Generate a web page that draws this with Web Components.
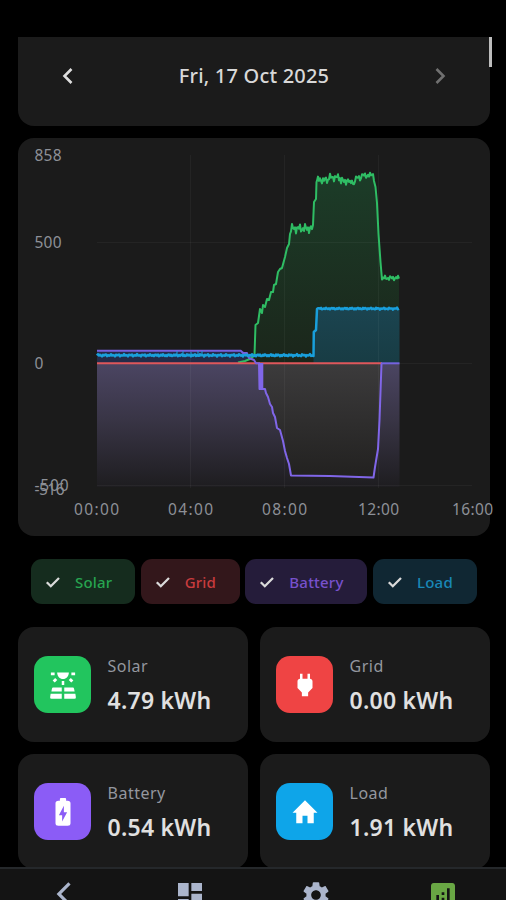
<!DOCTYPE html>
<html lang="en">
<head>
<meta charset="UTF-8">
<meta name="viewport" content="width=device-width, initial-scale=1.0">
<title>Energy History</title>
<style>
    html, body { margin: 0; height: 100%; background: #000; overflow: hidden; }
    body { font-family: "Noto Sans", "Open Sans", sans-serif; color: #dedede; }
</style>
</head>
<body>
<energy-app>
    <date-bar slot="content">Fri, 17 Oct 2025</date-bar>
    <power-chart slot="content"></power-chart>
    <chip-row slot="content">
        <series-chip series="solar" style="width:104px">Solar</series-chip>
        <series-chip series="grid" style="width:99px">Grid</series-chip>
        <series-chip series="battery" style="width:122px">Battery</series-chip>
        <series-chip series="load" style="width:104px">Load</series-chip>
    </chip-row>
    <stat-grid slot="content">
        <stat-card series="solar"><span slot="label">Solar</span>4.79 kWh</stat-card>
        <stat-card series="grid"><span slot="label">Grid</span>0.00 kWh</stat-card>
        <stat-card series="battery"><span slot="label">Battery</span>0.54 kWh</stat-card>
        <stat-card series="load"><span slot="label">Load</span>1.91 kWh</stat-card>
    </stat-grid>
    <nav-bar slot="nav"></nav-bar>
</energy-app>

<script>
const seriesData = {
    solar: {
        color: '#22c55e', chipText: '#27a450', chipBg: '#152c1e',
        icon: `<path d="M7.300 2h9.400c-.2 3.300-2 5.200-4.700 5.200S7.500 5.300 7.300 2z"/>
            <path d="M2.300 2h3v2.200h-3zM18.700 2h3v2.200h-3zM11 8.700h2v3.300h-2zM5.700 6.300l1.700 1.700-2 2-1.700-1.700zM18.300 6.300l2 2-1.700 1.700-2-2z"/>
            <path d="M4 14h7v3.200H2.700l.5-2.400q.2-.8.800-.8zM13 14h7q.6 0 .8.8l.5 2.400H13zM2.100 19H11v4H2.900Q1.500 23 1.700 21.800zM13 19h8.900l.4 2.800q.2 1.200-1.200 1.200H13z"/>`
    },
    grid: {
        color: '#ef4444', chipText: '#c93c3e', chipBg: '#33171b',
        icon: '<path d="M16.010 7L16 3h-2v4h-4V3H8v4h-.010C7 6.990 6 7.990 6 8.990v5.490L9.500 18v3h5v-3l3.500-3.510v-5.500c0-1-1-2-1.990-1.990z"/>'
    },
    battery: {
        color: '#8b5cf6', chipText: '#7751cc', chipBg: '#251c3a',
        icon: '<path fill-rule="evenodd" d="M15.700 3H14.500V1.500Q14.500.7 13.700.7h-3.400q-.8 0-.8.8V3H8.300Q6 3 6 5v16q0 2 2.300 2h7.400Q18 23 18 21V5q0-2-2.300-2zM11.300 19.500v-5H8.700L12.700 7v5.200h2.600z"/>'
    },
    load: {
        color: '#0ea5e9', chipText: '#1988b8', chipBg: '#102733',
        icon: '<path d="M10 21v-6h4v6h5v-8.500h3L12 2.500 2 12.500h3V21z"/>'
    }
};

class EnergyApp extends HTMLElement {
    constructor() {
        super();
        this.attachShadow({ mode: 'open' }).innerHTML = `
            <style>
                :host { display: flex; flex-direction: column; width: 506px; height: 900px; overflow: hidden; background: #000; position: relative; }
                main { flex: 1; min-height: 0; overflow: hidden; margin-top: 37px; padding: 0 16px 0 18px; display: flex; flex-direction: column; }
                .thumb { position: absolute; right: 14px; top: 37px; width: 3px; height: 30px; background: #bdbdbd; }
            </style>
            <main><slot name="content"></slot></main>
            <slot name="nav"></slot>
            <div class="thumb"></div>
        `;
    }
}

class DateBar extends HTMLElement {
    constructor() {
        super();
        this.attachShadow({ mode: 'open' }).innerHTML = `
            <style>
                :host { display: flex; flex: none; box-sizing: border-box; height: 89px; padding: 0 38px 12px; align-items: center; justify-content: space-between; background: #1b1b1b; border-radius: 0 0 16px 16px; }
                .date { font-size: 20px; font-weight: 500; letter-spacing: .2px; color: #d8d8d8; white-space: nowrap; }
                svg { width: 24px; height: 24px; fill: none; stroke: #dedede; stroke-width: 2.600; }
                svg.off { stroke: #707070; }
            </style>
            <svg viewBox="0 0 24 24"><path d="M15.500 5l-7 7 7 7"/></svg>
            <span class="date"><slot></slot></span>
            <svg class="off" viewBox="0 0 24 24"><path d="M8.500 5l7 7-7 7"/></svg>
        `;
    }
}

// small repeatable wobble so a line looks like sampled data
function wobble(x0, x1, y, amp, step = 1) {
    const pts = [];
    for (let x = x0, i = 0; x <= x1; x += step, i++) {
        const n = Math.sin(i * 2.400 + x0) * 0.6 + Math.sin(i * 5.300) * 0.4;
        pts.push([x, y + n * amp]);
    }
    return pts;
}

function toPath(pts) {
    return 'M' + pts.map(p => p[0].toFixed(1) + ' ' + p[1].toFixed(1)).join('L');
}

class PowerChart extends HTMLElement {
    constructor() {
        super();
        this.attachShadow({ mode: 'open' });
    }

    connectedCallback() {
        const solarPts = [
            [238, 362.5], [245, 361], [251, 358.5], [254.5, 355], [255.5, 325], [258, 323], [260, 309], [262, 313], [263, 305], [265, 307],
            [267, 299], [269, 300], [271, 292], [273, 292], [274, 285], [276, 284], [278, 272], [280, 269], [282, 268],
            [285, 257], [287, 248], [289, 244], [290, 234],
            ...wobble(291, 312, 228.5, 5), [313, 225], [314, 202], [316, 199], [316.5, 182],
            ...wobble(317, 328, 180, 4), ...wobble(329, 340, 177.5, 4), ...wobble(341, 348, 181, 4),
            ...wobble(349, 355, 182.5, 3), ...wobble(356, 361, 178, 3), ...wobble(362, 371, 175.500, 3),
            [373, 174], [374, 181], [375.5, 187], [377, 203], [378.5, 234], [380.5, 262], [382, 279.500],
            ...wobble(383, 399, 278, 2.500)
        ];
        const loadPts = [
            ...wobble(97, 312, 355.300, 1.200), [313.5, 356], [313.8, 332], [316, 330], [317, 309],
            ...wobble(318, 399, 308.600, 1)
        ];
        const dipPts = [
            [259, 363.5], [259.500, 389], [265, 389], [266, 393], [268, 397], [270, 404], [272, 407], [273, 413],
            [275, 417], [277, 428], [280, 430], [283, 441], [285, 451], [287, 458], [289, 464], [291, 475.500],
            [330, 476], [373.500, 477.500], [375, 467], [378, 449], [379.500, 420], [381.5, 363.5]
        ];
        const solar = toPath(solarPts);
        const load = toPath(loadPts);
        const dip = toPath(dipPts);

        const yLabels = [['858', 160.500, 27], ['500', 247.500, 27], ['0', 369, 9], ['-500', 491, 34], ['-516', 494.500, 30]];
        const xLabels = [['00:00', 96.5], ['04:00', 190.5], ['08:00', 284.5], ['12:00', 378.5], ['16:00', 472.5]];

        this.shadowRoot.innerHTML = `
            <style>
                :host { display: block; flex: none; height: 398px; margin-top: 12px; background: #1b1b1b; border-radius: 16px; }
                svg { display: block; overflow: visible; }
                text { font-size: 15.500px; font-weight: 400; fill: #8d9097; }
                .lines path { fill: none; stroke-width: 2; stroke-linejoin: round; }
                .rules path { stroke: #fff; stroke-opacity: .045; stroke-width: 1; }
            </style>
            <svg width="472" height="398" viewBox="18 138 472 398">
                <defs>
                    <linearGradient id="g-solar" gradientUnits="userSpaceOnUse" x1="0" x2="0" y1="175" y2="363">
                        <stop offset="0" stop-color="#1c3c28"/><stop offset="1" stop-color="#1b261b"/>
                    </linearGradient>
                    <linearGradient id="g-load" gradientUnits="userSpaceOnUse" x1="0" x2="0" y1="308" y2="363">
                        <stop offset="0" stop-color="#1b4450"/><stop offset="1" stop-color="#183c44"/>
                    </linearGradient>
                    <linearGradient id="g-battery" gradientUnits="userSpaceOnUse" x1="0" x2="0" y1="363" y2="487">
                        <stop offset="0" stop-color="#4b4562"/><stop offset=".45" stop-color="#393546"/><stop offset="1" stop-color="#1e1d20"/>
                    </linearGradient>
                    <linearGradient id="g-dip" gradientUnits="userSpaceOnUse" x1="0" x2="0" y1="363" y2="478">
                        <stop offset="0" stop-color="#3c3b3c"/><stop offset="1" stop-color="#222120"/>
                    </linearGradient>
                </defs>
                <path fill="#242c49" d="M97 351H243L259 363.500H97z"/>
                <path fill="url(#g-solar)" d="${solar}V363.500H238z"/>
                <path fill="url(#g-load)" d="M313.500 363.500V332L316 330L317 309H399.500V363.500z"/>
                <path fill="url(#g-battery)" d="M97 363.500H399.500V487H97z"/>
                <path fill="url(#g-dip)" d="${dip}z"/>
                <g class="rules">
                    <path d="M97 242.500H472M97 363.500H472M97 485.500H472M190.500 155V488M284.500 155V488M378.500 155V488"/>
                </g>
                <g class="lines">
                    <path stroke="#2fbd64" d="${solar}"/>
                    <path stroke="#df575b" d="M97 363.300H382"/>
                    <path stroke="#7960de" d="M97 350.800H241L243 353H247L249 358L254 360L256 363.300H260"/>
                    <path stroke="#8066e8" d="${dip}"/>
                    <path stroke="#8066e8" style="stroke-width:4" d="M261.300 363V390"/>
                    <path stroke="#7563df" d="M381 363.300H399.500"/>
                    <path stroke="#199fdb" style="stroke-width:2.500" d="${load}"/>
                    <path stroke="#1ba0df" style="stroke-width:1" d="M177 351V356M183 351V356M191 352V356M198 351V356M202 351V355"/>
                </g>
                ${yLabels.map(l => `<text x="34.500" y="${l[1]}" textLength="${l[2]}">${l[0]}</text>`).join('')}
                ${xLabels.map(l => `<text x="${l[1]}" y="514.500" text-anchor="middle" textLength="${l[0][0] === '1' ? 41 : 45}">${l[0]}</text>`).join('')}
            </svg>
        `;
    }
}

class ChipRow extends HTMLElement {
    constructor() {
        super();
        this.attachShadow({ mode: 'open' }).innerHTML = `
            <style>
                :host { display: flex; flex: none; justify-content: center; gap: 5.700px; margin-top: 23px; }
            </style>
            <slot></slot>
        `;
    }
}

class SeriesChip extends HTMLElement {
    constructor() {
        super();
        this.attachShadow({ mode: 'open' });
    }

    connectedCallback() {
        const data = seriesData[this.getAttribute('series')];
        this.shadowRoot.innerHTML = `
            <style>
                :host { display: flex; flex: none; box-sizing: border-box; height: 45px; padding-left: 13px; gap: 13px; align-items: center; border-radius: 11px; background: ${data.chipBg}; color: ${data.chipText}; font-size: 15px; font-weight: 500; letter-spacing: .2px; }
                svg { width: 18px; height: 18px; flex: none; fill: none; stroke: #dadada; stroke-width: 2.300; }
            </style>
            <svg viewBox="0 0 18 18"><path d="M2.800 9.200l4 4L15 5"/></svg>
            <span><slot></slot></span>
        `;
    }
}

class StatGrid extends HTMLElement {
    constructor() {
        super();
        this.attachShadow({ mode: 'open' }).innerHTML = `
            <style>
                :host { display: grid; flex: none; grid-template-columns: 1fr 1fr; grid-auto-rows: 115px; gap: 12px; margin-top: 23px; }
            </style>
            <slot></slot>
        `;
    }
}

class StatCard extends HTMLElement {
    constructor() {
        super();
        this.attachShadow({ mode: 'open' });
    }

    connectedCallback() {
        const data = seriesData[this.getAttribute('series')];
        this.shadowRoot.innerHTML = `
            <style>
                :host { display: flex; box-sizing: border-box; padding-left: 16px; gap: 16.500px; align-items: center; background: #1b1b1b; border-radius: 16px; }
                .icon { display: grid; place-items: center; width: 57px; height: 57px; border-radius: 14px; background: ${data.color}; }
                svg { width: 30px; height: 30px; fill: #fff; }
                .label { font-size: 16px; line-height: 24px; margin-top: 1px; color: #94979f; letter-spacing: .5px; }
                .value { font-size: 23px; line-height: 32px; margin-top: 6px; font-weight: 600; color: #e0e0e0; letter-spacing: .25px; white-space: nowrap; }
            </style>
            <div class="icon"><svg viewBox="0 0 24 24">${data.icon}</svg></div>
            <div>
                <div class="label"><slot name="label"></slot></div>
                <div class="value"><slot></slot></div>
            </div>
        `;
    }
}

class NavBar extends HTMLElement {
    constructor() {
        super();
        this.attachShadow({ mode: 'open' }).innerHTML = `
            <style>
                :host { display: grid; grid-template-columns: repeat(4, 1fr); flex: none; box-sizing: border-box; height: 33px; overflow: hidden; background: #141414; border-top: 2px solid #25282b; }
                svg { width: 32px; height: 32px; margin-top: 10px; justify-self: center; fill: #abb5cc; }
                .active { fill: #69a744; }
            </style>
            <svg viewBox="0 0 24 24"><path d="M17.700 4.200L16 2.500 7.200 11.300l8.800 8.800 1.700-1.700-7.100-7.100z"/></svg>
            <svg viewBox="0 0 24 24"><path d="M3 13h8V3H3v10zm0 8h8v-6H3v6zm10 0h8V11h-8v10zm0-18v6h8V3h-8z"/></svg>
            <svg viewBox="0 0 24 24"><path d="M19.140 12.940c.04-.3.060-.61.060-.94 0-.32-.02-.64-.07-.94l2.030-1.580c.18-.14.23-.41.12-.61l-1.920-3.320c-.12-.22-.37-.29-.59-.22l-2.390.96c-.5-.38-1.030-.7-1.620-.94l-.36-2.540c-.04-.24-.24-.41-.48-.41h-3.840c-.24 0-.43.17-.47.41l-.36 2.540c-.59.24-1.130.57-1.620.94l-2.390-.96c-.22-.08-.47 0-.59.22L2.740 8.870c-.12.21-.08.47.12.61l2.030 1.580c-.05.3-.09.63-.09.94s.02.64.07.94l-2.030 1.580c-.18.14-.23.41-.12.61l1.920 3.320c.12.22.37.29.59.22l2.390-.96c.5.38 1.030.7 1.620.94l.36 2.540c.05.24.24.41.48.41h3.840c.24 0 .44-.17.47-.41l.36-2.540c.59-.24 1.130-.56 1.620-.94l2.390.96c.22.08.47 0 .59-.22l1.920-3.320c.12-.22.07-.47-.12-.61l-2.010-1.580zM12 15.600c-1.980 0-3.600-1.620-3.600-3.600s1.620-3.600 3.600-3.600 3.600 1.620 3.600 3.600-1.620 3.600-3.600 3.600z"/></svg>
            <svg class="active" viewBox="0 0 24 24"><path fill-rule="evenodd" d="M19 3H5c-1.100 0-2 .9-2 2v14c0 1.100.9 2 2 2h14c1.100 0 2-.9 2-2V5c0-1.100-.9-2-2-2zM9 17H7v-5h2v5zm4 0h-2v-3h2v3zm0-5h-2v-2h2v2zm4 5h-2V7h2v10z"/></svg>
        `;
    }
}

customElements.define('energy-app', EnergyApp);
customElements.define('date-bar', DateBar);
customElements.define('power-chart', PowerChart);
customElements.define('chip-row', ChipRow);
customElements.define('series-chip', SeriesChip);
customElements.define('stat-grid', StatGrid);
customElements.define('stat-card', StatCard);
customElements.define('nav-bar', NavBar);
</script>
</body>
</html>
